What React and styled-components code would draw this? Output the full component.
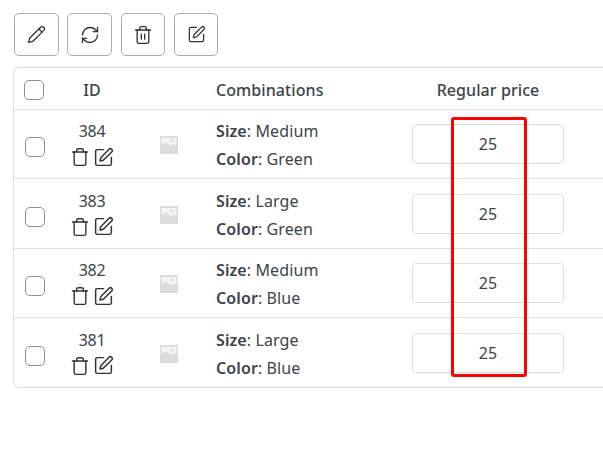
import React from 'react';
import styled, { createGlobalStyle } from 'styled-components';
import { Pencil, RefreshCw, Trash, Trash2, SquarePen } from 'lucide-react';

const Global = createGlobalStyle`
  html, body { margin: 0; padding: 0; background: #fff; overflow: hidden; }
  body { font-family: "Noto Sans", "Open Sans", sans-serif; color: #3c434a; font-size: 16px; }
`;
const Page = styled.div`
  position: relative;
  width: 603px;
  height: 453px;
  overflow: hidden;
  padding: 13px 0 0 14px;
  box-sizing: border-box;
`;
const Toolbar = styled.div`
  display: flex;
  gap: 8.83px;
  margin-bottom: 11px;
`;
const ToolButton = styled.button`
  width: 44.5px;
  height: 43px;
  padding: 0;
  display: flex;
  align-items: center;
  justify-content: center;
  background: #fff;
  border: 1px solid #aaa;
  border-radius: 5px;
  color: #2f3337;
`;
const Table = styled.div`
  width: 640px;
  margin-left: -1px;
  border: 1px solid #ddd;
  border-radius: 6px;
  box-sizing: border-box;
`;
const Row = styled.div`
  display: grid;
  grid-template-columns: 46px 64px 92px 196px 152px;
  align-items: center;
  height: ${p => p.$h}px;
  box-sizing: border-box;
  border-top: ${p => (p.$first ? 'none' : '1px solid #ddd')};
`;
const Box = styled.span`
  display: block;
  width: 18px;
  height: 18px;
  margin-left: ${p => p.$left}px;
  margin-top: ${p => p.$top}px;
  border: 1px solid #8c8f94;
  border-radius: 5px;
`;
const Head = styled.div`
  font-size: 16px;
  font-weight: 500;
  padding-top: 2px;
  text-align: ${p => p.$align || 'left'};
  color: #3c434a;
  letter-spacing: 0.08px;
`;
const IdCell = styled.div`
  display: flex;
  flex-direction: column;
  align-items: center;
  gap: 4px;
  font-size: 16px;
  line-height: 22px;
  letter-spacing: -0.3px;
`;
const Actions = styled.div`
  display: flex;
  align-items: center;
  gap: 3px;
  height: 22px;
  color: #2f3337;
`;
const Thumb = styled.svg`
  display: block;
  margin: 2px 0 0 36px;
`;
const Combo = styled.div`
  font-size: 16px;
  line-height: 28px;
  padding-top: 2px;
  letter-spacing: 0.1px;
  b { font-weight: 600; }
`;
const PriceBox = styled.div`
  height: 40px;
  border: 1px solid #ddd;
  border-radius: 4px;
  box-sizing: border-box;
  display: flex;
  align-items: center;
  justify-content: center;
  font-size: 16px;
`;
const Highlight = styled.div`
  position: absolute;
  left: 451px;
  top: 117px;
  width: 76px;
  height: 260px;
  border: 3px solid #f00;
  border-radius: 3px;
  box-sizing: border-box;
  pointer-events: none;
`;

const Placeholder = () => (
  <Thumb width="18" height="18" viewBox="0 0 18 18">
    <rect width="18" height="18" fill="#dcdcde" />
    <path d="M1.5 2 H16.5 V9.5 L14 8.5 L10.5 10 L6 6.5 L1.5 9 Z" fill="#f4f4f4" />
    <circle cx="12" cy="5" r="1.6" fill="#dcdcde" />
  </Thumb>
);

const rows = [
  { id: 384, size: 'Medium', color: 'Green', h: 69 },
  { id: 383, size: 'Large', color: 'Green', h: 70 },
  { id: 382, size: 'Medium', color: 'Blue', h: 69 },
  { id: 381, size: 'Large', color: 'Blue', h: 70 },
];

export default function App() {
  return (
    <Page>
      <Global />
      <Toolbar>
        <ToolButton><Pencil size={19} strokeWidth={1.6} /></ToolButton>
        <ToolButton><RefreshCw size={20} strokeWidth={1.6} /></ToolButton>
        <ToolButton><Trash2 size={20} strokeWidth={1.6} /></ToolButton>
        <ToolButton><SquarePen size={19} strokeWidth={1.6} /></ToolButton>
      </Toolbar>
      <Table>
        <Row $h={41} $first>
          <Box $left={10} $top={3} />
          <Head $align="center">ID</Head>
          <span />
          <Head>Combinations</Head>
          <Head $align="center">Regular price</Head>
        </Row>
        {rows.map(r => (
          <Row key={r.id} $h={r.h}>
            <Box $left={11} $top={6} />
            <IdCell>
              {r.id}
              <Actions>
                <Trash size={20} strokeWidth={1.7} />
                <SquarePen size={21} strokeWidth={1.7} />
              </Actions>
            </IdCell>
            <Placeholder />
            <Combo>
              <div><b>Size</b>: {r.size}</div>
              <div><b>Color</b>: {r.color}</div>
            </Combo>
            <PriceBox>25</PriceBox>
          </Row>
        ))}
      </Table>
      <Highlight />
    </Page>
  );
}
